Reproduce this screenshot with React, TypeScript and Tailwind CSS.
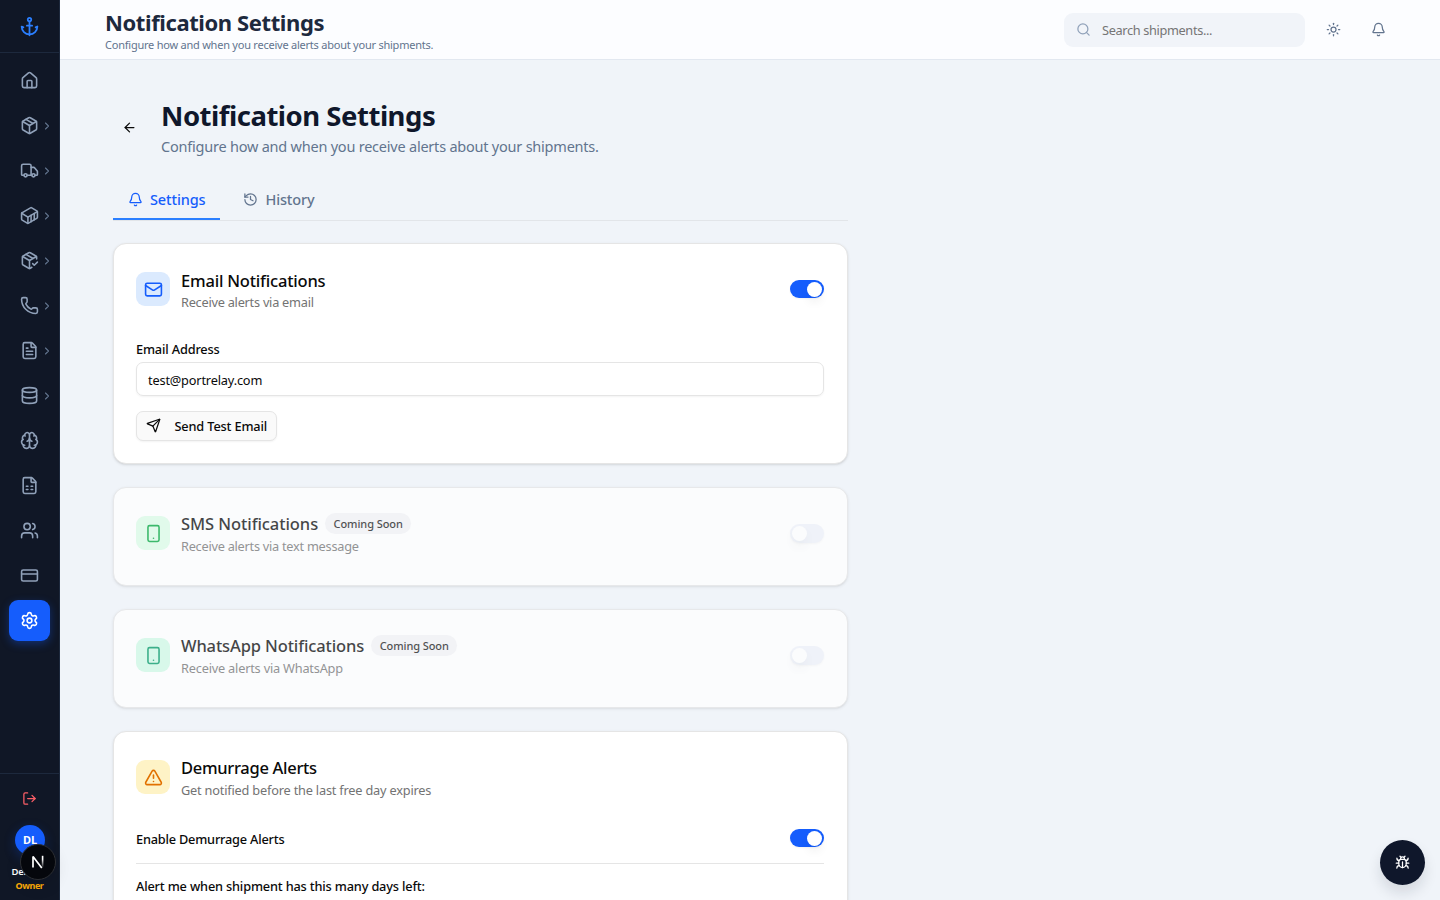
import type { ReactNode } from "react";
import {
  Anchor,
  ArrowLeft,
  Bell,
  Brain,
  Bug,
  ChevronRight,
  Container,
  CreditCard,
  Database,
  FileSpreadsheet,
  FileText,
  History,
  House,
  LogOut,
  Mail,
  Package,
  PackageCheck,
  Phone,
  Search,
  Send,
  Settings,
  Smartphone,
  Sun,
  TriangleAlert,
  Truck,
  Users,
  type LucideIcon,
} from "lucide-react";

const navItems: { icon: LucideIcon; label: string; expandable?: boolean; active?: boolean }[] = [
  { icon: House, label: "home" },
  { icon: Package, label: "shipments", expandable: true },
  { icon: Truck, label: "trucking", expandable: true },
  { icon: Container, label: "containers", expandable: true },
  { icon: PackageCheck, label: "deliveries", expandable: true },
  { icon: Phone, label: "calls", expandable: true },
  { icon: FileText, label: "documents", expandable: true },
  { icon: Database, label: "data", expandable: true },
  { icon: Brain, label: "insights" },
  { icon: FileSpreadsheet, label: "reports" },
  { icon: Users, label: "team" },
  { icon: CreditCard, label: "billing" },
  { icon: Settings, label: "settings", active: true },
];

function Sidebar() {
  return (
    <aside className="flex h-full w-[60px] shrink-0 flex-col border-r border-[#1d293d] bg-[#101726]">
      <div className="flex h-[53px] items-center justify-center border-b border-[#1d293d]">
        <Anchor size={21} className="text-[#2b7fff]" />
      </div>
      <nav className="flex flex-1 flex-col gap-1 px-[9px] pt-[7px]">
        {navItems.map(({ icon: Icon, label, expandable, active }) => (
          <a
            key={label}
            className={
              active
                ? "relative flex h-[41px] items-center justify-center rounded-[9px] bg-[#155dfc] text-white shadow-[0_3px_8px_rgba(21,93,252,0.35)]"
                : "relative flex h-[41px] items-center justify-center rounded-[9px] text-[#90a1b9]"
            }
          >
            <Icon size={19} strokeWidth={2} />
            {expandable && (
              <ChevronRight size={12} strokeWidth={2.2} className="absolute top-[14.5px] right-[-2.5px] text-[#62748e]" />
            )}
          </a>
        ))}
      </nav>
      <div className="flex h-[127px] flex-col items-center border-t border-[#1d293d] pt-[17px]">
        <LogOut size={15} className="text-[#fb5f67]" />
        <div className="mt-[19px] ml-px flex size-[30px] shrink-0 items-center justify-center rounded-full bg-[#155dfc] text-[11px] font-bold tracking-[-0.2px] text-white shadow-[0_4px_12px_rgba(21,93,252,0.25)]">
          DL
        </div>
        <div className="mt-[10px] text-[9.5px] leading-[14px] font-semibold tracking-[-0.25px] whitespace-nowrap text-white">
          Demo L.
        </div>
        <div className="text-[9px] leading-[14px] font-bold tracking-[-0.45px] text-[#fdab08]">Owner</div>
      </div>
    </aside>
  );
}

function Header() {
  return (
    <header className="flex h-[60px] shrink-0 items-center border-b border-[#e2e8f0] bg-[#fcfdff] pr-[54px] pl-[45px]">
      <div className="flex-1">
        <div className="text-[22px] leading-[28px] font-bold tracking-[-0.4px] text-[#1d293d]">Notification Settings</div>
        <div className="-mb-px pt-[2px] text-[11px] leading-[14px] tracking-[-0.23px] text-[#62748e]">
          Configure how and when you receive alerts about your shipments.
        </div>
      </div>
      <div className="mr-[21px] flex h-[34px] w-[241px] items-center gap-[11px] rounded-[9px] bg-[#f1f4f9] pl-[12px]">
        <Search size={15} className="text-[#90a1b9]" />
        <span className="pt-[2px] text-[12.75px] tracking-[-0.35px] text-[#757575]">Search shipments...</span>
      </div>
      <Sun size={15} className="mr-[30px] text-[#62748e]" />
      <Bell size={15} className="text-[#62748e]" />
    </header>
  );
}

function Toggle({ on }: { on?: boolean }) {
  return (
    <div
      className={
        on
          ? "flex h-[18px] w-[34px] items-center justify-end rounded-full bg-[#155dfc] px-[2px] shadow-xs"
          : "flex h-[19px] w-[34px] items-center rounded-full bg-[#e9edf7] px-[2px] opacity-70 shadow-xs"
      }
    >
      <span className="size-[15px] rounded-full bg-white shadow-[0_6px_10px_rgba(0,0,0,0.05)]" />
    </div>
  );
}

function Card({ className, children }: { className: string; children: ReactNode }) {
  return (
    <section
      className={
        "rounded-[13px] border border-[#e5e5e5] bg-white pt-[22px] pr-[23px] pl-[22px] shadow-[0_1px_3px_rgba(0,0,0,0.1),0_1px_2px_-1px_rgba(0,0,0,0.1)] " +
        className
      }
    >
      {children}
    </section>
  );
}

function CardHead({
  icon: Icon,
  tile,
  title,
  titleClass,
  text,
  textClass,
  soon,
  toggle,
}: {
  icon: LucideIcon;
  tile: string;
  title: string;
  titleClass: string;
  text: string;
  textClass: string;
  soon?: boolean;
  toggle?: ReactNode;
}) {
  return (
    <div className="flex h-[46px] items-center">
      <div className={"flex size-[34px] items-center justify-center rounded-[9px] " + tile}>
        <Icon size={19} />
      </div>
      <div className="ml-[11px] flex-1">
        <div className="flex h-[23px] items-center gap-[7px]">
          <h3 className={"text-[16.5px] leading-[23px] font-medium " + titleClass}>{title}</h3>
          {soon && (
            <span className="rounded-full bg-[#f3f3f5] pr-[8px] pl-[8.5px] text-[11px] leading-[21px] font-medium tracking-[-0.08px] text-[#171717]">
              Coming Soon
            </span>
          )}
        </div>
        <p className={"-mb-px pt-[2px] text-[12.75px] leading-[19px] text-[#737373] " + textClass}>{text}</p>
      </div>
      {toggle}
    </div>
  );
}

export default function App() {
  return (
    <div className="flex h-[900px] w-[1440px] overflow-hidden bg-[#f0f4f9] font-['Noto_Sans','Open_Sans',sans-serif] text-[#0a0a0a]">
      <Sidebar />
      <div className="flex min-w-0 flex-1 flex-col">
        <Header />
        <main className="min-h-0 flex-1 overflow-hidden pt-[38px] pl-[53px]">
          <div className="w-[735px]">
            <div className="flex h-[60px] items-center">
              <ArrowLeft size={15} className="mr-[24px] mb-[2px] ml-[9px]" />
              <div>
                <h1 className="text-[27.5px] leading-[36px] font-bold tracking-[-0.48px] text-[#0f172b]">Notification Settings</h1>
                <p className="text-[14.5px] leading-[24px] tracking-[-0.223px] text-[#62748e]">
                  Configure how and when you receive alerts about your shipments.
                </p>
              </div>
            </div>

            <div className="mt-[22px] flex h-[41px] border-b border-[#e2e5e9] text-[14.5px] font-medium">
              <div className="flex w-[107px] items-center border-b-2 border-[#2b7fff] pt-px pl-[15px] text-[#155dfc]">
                <Bell size={15} className="mr-[7px]" />
                <span className="tracking-[-0.12px]">Settings</span>
              </div>
              <div className="flex items-center border-b-2 border-transparent pt-px pl-[23px] text-[#62748e]">
                <History size={15} className="mr-[7.5px]" />
                <span className="tracking-[-0.16px]">History</span>
              </div>
            </div>

            <div className="mt-[22px] flex flex-col gap-[23px]">
              <Card className="h-[221px]">
                <CardHead
                  icon={Mail}
                  tile="bg-[#dbeafe] text-[#155dfc]"
                  title="Email Notifications"
                  titleClass="pt-[2px] tracking-[-0.2px]"
                  text="Receive alerts via email"
                  textClass="tracking-[-0.25px]"
                  toggle={<Toggle on />}
                />
                <div className="mt-[27px] text-[12.75px] leading-[20px] font-medium tracking-[-0.16px]">Email Address</div>
                <div className="mt-[3px] flex h-[34px] items-center rounded-[7px] border border-[#e5e5e5] px-[11px] pt-[3px] text-[12.75px] tracking-[-0.17px] shadow-[0_1px_2px_rgba(0,0,0,0.05)]">
                  test@portrelay.com
                </div>
                <button className="mt-[15px] flex h-[30px] w-[141px] items-center rounded-[7px] border border-[#e5e5e5] bg-[#fafafa] pl-[9px] text-[12.75px] font-medium tracking-[-0.155px] shadow-[0_1px_2px_rgba(0,0,0,0.05)]">
                  <Send size={15} className="mr-[13.5px] mb-[2px]" />
                  <span className="pt-px">Send Test Email</span>
                </button>
              </Card>

              <Card className="h-[99px] opacity-75">
                <CardHead
                  icon={Smartphone}
                  tile="bg-[#dcfce7] text-[#00a63e]"
                  title="SMS Notifications"
                  titleClass="tracking-[-0.075px]"
                  text="Receive alerts via text message"
                  textClass="tracking-[-0.255px]"
                  soon
                  toggle={<Toggle />}
                />
              </Card>

              <Card className="h-[99px] opacity-75">
                <CardHead
                  icon={Smartphone}
                  tile="bg-[#d0fae5] text-[#009966]"
                  title="WhatsApp Notifications"
                  titleClass="tracking-[-0.13px]"
                  text="Receive alerts via WhatsApp"
                  textClass="tracking-[-0.2px]"
                  soon
                  toggle={<Toggle />}
                />
              </Card>

              <Card className="h-[300px]">
                <CardHead
                  icon={TriangleAlert}
                  tile="bg-[#fef3c6] text-[#e17100]"
                  title="Demurrage Alerts"
                  titleClass="tracking-[-0.3px]"
                  text="Get notified before the last free day expires"
                  textClass="tracking-[-0.195px]"
                />
                <div className="mt-[22px] flex h-[42px] items-start justify-between border-b border-[#e5e5e5] pt-[7px]">
                  <span className="text-[12.75px] leading-[20px] font-medium tracking-[-0.2px]">Enable Demurrage Alerts</span>
                  <Toggle on />
                </div>
                <div className="mt-[12px] text-[12.75px] leading-[20px] font-medium tracking-[-0.165px]">
                  Alert me when shipment has this many days left:
                </div>
              </Card>
            </div>
          </div>
        </main>
      </div>

      <div className="fixed top-[844px] left-[20px] flex size-[36px] items-center justify-center rounded-full border border-[#2d2f33] bg-[#05070c] shadow-[0_6px_16px_rgba(0,0,0,0.12)]">
        <svg width="14" height="14" viewBox="0 0 14 14" fill="none">
          <defs>
            <linearGradient id="stem" x1="0" y1="0" x2="0" y2="1">
              <stop offset="0.3" stopColor="#fff" />
              <stop offset="1" stopColor="#fff" stopOpacity="0.1" />
            </linearGradient>
          </defs>
          <path d="M2 12.6V1.4L10.8 13" stroke="#fff" strokeWidth="1.7" strokeLinejoin="bevel" />
          <rect x="10.8" y="0.8" width="1.6" height="11.4" fill="url(#stem)" />
        </svg>
      </div>

      <button className="fixed top-[840px] left-[1380px] flex size-[45px] items-center justify-center rounded-full bg-[#0f172b] text-white shadow-[0_8px_14px_rgba(15,23,43,0.12)]">
        <Bug size={15} />
      </button>
    </div>
  );
}
